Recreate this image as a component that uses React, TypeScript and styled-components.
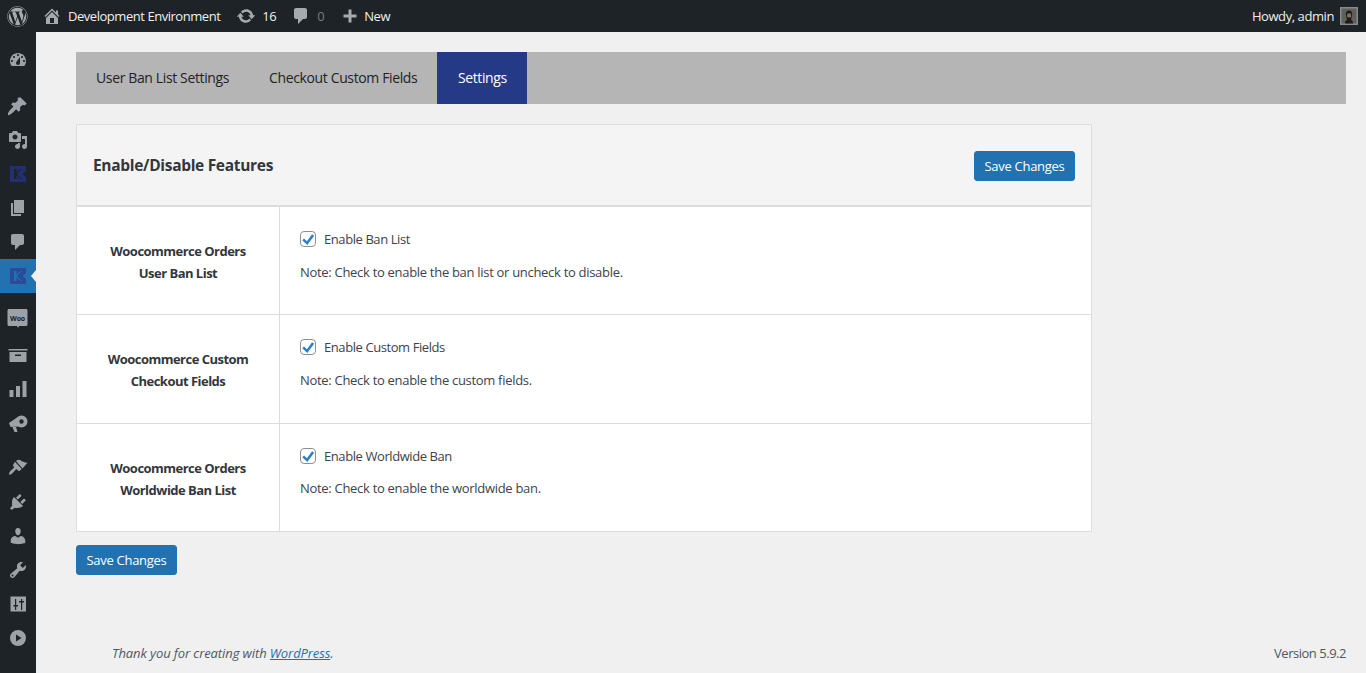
import React from "react";
import styled, { createGlobalStyle } from "styled-components";
import { FaWordpress } from "react-icons/fa";

const GlobalStyle = createGlobalStyle`
  html, body {
    margin: 0;
    padding: 0;
    background: #f0f0f1;
    font-family: "Open Sans", "Liberation Sans", sans-serif;
    color: #3c434a;
    font-size: 13px;
    letter-spacing: -0.3px;
  }
  * {
    box-sizing: border-box;
  }
`;

const Page = styled.div`
  width: 1366px;
  height: 673px;
  display: flex;
  flex-direction: column;
  overflow: hidden;
`;

const AdminBar = styled.div`
  height: 32px;
  flex: none;
  background: #1d2327;
  color: #f0f0f1;
  display: flex;
  align-items: center;
  padding: 0 8px 0 7px;
  letter-spacing: -0.46px;
`;

const BarItem = styled.div<{ $dim?: boolean; $left: number; $gap?: number }>`
  display: flex;
  align-items: center;
  gap: ${(p) => p.$gap ?? 6}px;
  margin-left: ${(p) => p.$left}px;
  color: ${(p) => (p.$dim ? "#787c82" : "#f0f0f1")};
  white-space: nowrap;
  svg {
    color: #a7aaad;
    flex: none;
  }
`;

const Howdy = styled.div`
  margin-left: auto;
  display: flex;
  align-items: center;
  gap: 6px;
  letter-spacing: -0.42px;
`;

const Avatar = styled.svg`
  width: 18px;
  height: 18px;
  display: block;
`;

const Body = styled.div`
  flex: 1;
  display: flex;
  min-height: 0;
`;

const Sidebar = styled.nav`
  width: 36px;
  flex: none;
  background: #1d2327;
  padding-top: 11px;
`;

const MenuItem = styled.div<{ $active?: boolean; $top?: number }>`
  position: relative;
  height: 34px;
  margin-top: ${(p) => p.$top || 0}px;
  display: flex;
  align-items: center;
  justify-content: center;
  padding-right: 1px;
  color: #9ca2a7;
  background: ${(p) => (p.$active ? "#2271b1" : "transparent")};
  ${(p) =>
    p.$active &&
    `&::after {
      content: "";
      position: absolute;
      right: 0;
      top: 50%;
      margin-top: -6px;
      border: 6px solid transparent;
      border-right-color: #f0f0f1;
      border-left-width: 0;
      border-right-width: 5px;
    }`}
`;

const Main = styled.main`
  flex: 1;
  min-width: 0;
  display: flex;
  flex-direction: column;
  padding: 20px 20px 10px 40px;
`;

const TabBar = styled.div`
  height: 52px;
  background: #b5b5b5;
  display: flex;
`;

const Tab = styled.div<{ $active?: boolean }>`
  padding: 0 20px 2px;
  display: flex;
  align-items: center;
  font-size: 14px;
  letter-spacing: -0.37px;
  color: ${(p) => (p.$active ? "#fff" : "#1d2327")};
  background: ${(p) => (p.$active ? "#253a86" : "transparent")};
`;

const ActiveTab = styled(Tab)`
  width: 90px;
  justify-content: center;
  padding: 0 0 2px;
`;

const Card = styled.section`
  width: 1016px;
  margin-top: 20px;
  background: #fff;
  border: 1px solid #dcdcde;
`;

const CardHeader = styled.header`
  height: 82px;
  background: #f4f4f4;
  border-bottom: 2px solid #dcdcde;
  display: flex;
  align-items: center;
  justify-content: space-between;
  padding: 0 16px;
`;

const CardTitle = styled.h2`
  margin: 0;
  font-size: 15.5px;
  font-weight: 700;
  letter-spacing: -0.31px;
  color: #32373c;
`;

const Button = styled.button`
  height: 30px;
  width: 101px;
  padding: 0;
  border: 1px solid #2271b1;
  border-radius: 3px;
  background: #2271b1;
  color: #fff;
  font: inherit;
  letter-spacing: -0.28px;
  cursor: pointer;
`;

const HeaderButton = styled(Button)`
  margin-top: 2px;
`;

const Row = styled.div<{ $height: number; $last?: boolean }>`
  height: ${(p) => p.$height}px;
  display: grid;
  grid-template-columns: 203px 1fr;
  border-bottom: ${(p) => (p.$last ? "none" : "1px solid #dcdcde")};
`;

const RowLabel = styled.div`
  border-right: 1px solid #dcdcde;
  display: flex;
  align-items: center;
  justify-content: center;
  text-align: center;
  font-weight: 700;
  letter-spacing: -0.52px;
  line-height: 22px;
  color: #32373c;
  padding: 2px 20px 0;
`;

const RowBody = styled.div`
  padding: 24px 20px 0;
`;

const CheckLine = styled.label`
  display: flex;
  align-items: center;
  gap: 8px;
  height: 16px;
  letter-spacing: -0.42px;
`;

const CheckBox = styled.span`
  width: 16px;
  height: 16px;
  border: 1px solid #8c8f94;
  border-radius: 4px;
  background: #fff;
  display: flex;
  align-items: center;
  justify-content: center;
`;

const Note = styled.p<{ $gap: number }>`
  margin: ${(p) => p.$gap}px 0 0;
  line-height: 17px;
`;

const BottomBar = styled.div`
  margin-top: 13px;
`;

const Footer = styled.footer`
  margin-top: auto;
  padding-left: 36px;
  display: flex;
  justify-content: space-between;
  color: #50575e;
  line-height: 20px;
`;

const Thanks = styled.em`
  letter-spacing: -0.09px;
  a {
    color: #2271b1;
    text-decoration: underline;
  }
`;

const Version = styled.span`
  letter-spacing: -0.48px;
`;

const Icon = ({ children }: { children: React.ReactNode }) => (
  <svg width="20" height="20" viewBox="0 0 20 20" fill="currentColor">
    {children}
  </svg>
);

const HomeIcon = () => (
  <Icon>
    <path d="M16 8.500l1.530 1.530-1.060 1.060L10 4.620l-6.470 6.470-1.060-1.060L10 2.500l4 4v-2h2v4zm-6-2.460l6 5.990V18H4v-5.970zM12 17v-5H8v5h4z" />
  </Icon>
);

const UpdateIcon = () => (
  <Icon>
    <path d="M10.200 3.280c3.530 0 6.430 2.610 6.920 6h2.080l-3.500 4-3.500-4h2.320c-.450-1.970-2.210-3.440-4.320-3.440-1.450 0-2.730.710-3.540 1.780L4.950 5.660C6.230 4.200 8.110 3.280 10.200 3.280zm-.400 13.440c-3.520 0-6.430-2.610-6.920-6H.800l3.500-4c1.170 1.330 2.330 2.670 3.500 4H5.480c.450 1.970 2.210 3.440 4.320 3.440 1.450 0 2.730-.710 3.540-1.780l1.710 1.950c-1.280 1.460-3.150 2.390-5.250 2.390z" />
  </Icon>
);

const CommentPath = () => (
  <path d="M5 2h9c1.100 0 2 .900 2 2v7c0 1.100-.900 2-2 2h-2l-5 5v-5H5c-1.100 0-2-.900-2-2V4c0-1.100.900-2 2-2z" />
);

const PlusIcon = () => (
  <svg width="20" height="20" viewBox="0.500 -1.500 20 20" fill="currentColor">
    <path d="M17 7v3h-5v5H9v-5H4V7h5V2h3v5h5z" />
  </svg>
);

const DashboardIcon = () => (
  <Icon>
    <path
      fillRule="evenodd"
      d="M3.760 16h12.480c1.100-1.370 1.760-3.110 1.760-5 0-4.420-3.580-8-8-8s-8 3.580-8 8c0 1.890.660 3.630 1.760 5zM10 4c.550 0 1 .450 1 1s-.450 1-1 1-1-.450-1-1 .450-1 1-1zM6 6c.550 0 1 .450 1 1s-.450 1-1 1-1-.450-1-1 .450-1 1-1zm8 0c.550 0 1 .450 1 1s-.450 1-1 1-1-.450-1-1 .450-1 1-1zm-5.370 5.550L12 7v6c0 1.100-.900 2-2 2s-2-.900-2-2c0-.570.240-1.080.630-1.450zM4 10c.550 0 1 .450 1 1s-.450 1-1 1-1-.450-1-1 .450-1 1-1zm12 0c.550 0 1 .450 1 1s-.450 1-1 1-1-.450-1-1 .450-1 1-1z"
    />
  </Icon>
);

const PinIcon = () => (
  <Icon>
    <path d="M12.300 1.200l6.400 6.400-1.800 1.800c-1-.7-2.500-.6-3.400.4l-.8.700c-.9.900-1 2.400-.3 3.400l-1.900 1.800-2.400-2.400-2.900 2.900c-1.500 1.600-4.900 3.500-5.500 2.900-.7-.7 1.300-4 2.900-5.600l2.900-2.900-2.400-2.400 1.800-1.800c1.100.7 2.500.6 3.400-.4l.8-.7c.9-.9 1-2.400.3-3.400z" />
  </Icon>
);

const MediaIcon = () => (
  <Icon>
    <path
      fillRule="evenodd"
      d="M13 11V4c0-.550-.450-1-1-1h-1.670L9 1H5L3.670 3H2c-.550 0-1 .450-1 1v7c0 .550.450 1 1 1h10c.550 0 1-.450 1-1zM7 4.500c1.380 0 2.500 1.120 2.500 2.500S8.380 9.500 7 9.500 4.500 8.380 4.500 7 5.620 4.500 7 4.500z"
    />
    <path d="M14 6h5v10.500c0 1.380-1.120 2.500-2.500 2.500S14 17.880 14 16.500s1.120-2.500 2.500-2.500c.170 0 .340.020.500.050V9h-3V6zm-4 8.050V13h2v3.500c0 1.380-1.120 2.500-2.500 2.500S7 17.880 7 16.500 8.120 14 9.500 14c.170 0 .340.020.500.050z" />
  </Icon>
);

const KLogo = ({ color }: { color: string }) => (
  <svg width="20" height="20" viewBox="0 0 20 20">
    <path
      fill={color}
      fillRule="evenodd"
      d="M2 2h16v5l-3.300 3 3.300 3v5H2zM6 5v10h2.500v-3.700L12.500 15h1.300l-5-5 5-5h-1.300L8.500 8.700V5z"
    />
  </svg>
);

const PagesIcon = () => (
  <Icon>
    <path d="M6 15V2h10v13H6zm-1 1h8v2H3V5h2v11z" />
  </Icon>
);

const WooIcon = () => (
  <svg width="21" height="21" viewBox="0 0 21 21">
    <path
      fill="currentColor"
      d="M2 1h17c.800 0 1.500.700 1.500 1.500v14c0 .800-.700 1.500-1.500 1.500h-7l-1 2-1-2H2c-.800 0-1.500-.700-1.500-1.500v-14C.500 1.700 1.200 1 2 1z"
    />
    <text x="10.500" y="12.500" textAnchor="middle" fontSize="7" fontWeight="700" letterSpacing="-0.200" fill="#1d2327" fontFamily="Open Sans, sans-serif">
      Woo
    </text>
  </svg>
);

const ArchiveIcon = () => (
  <Icon>
    <path d="M0.500 4h19v1.500h-19z" />
    <path fillRule="evenodd" d="M1.500 7h17v10h-17zM7 9.500V11h6V9.500z" />
  </Icon>
);

const ChartIcon = () => (
  <Icon>
    <path d="M1.500 11h4v7h-4zM8 7h4v11H8zM14.500 2h4v16h-4z" />
  </Icon>
);

const MegaphoneIcon = () => (
  <Icon>
    <path fillRule="evenodd" d="M13.500 2.500a6 6 0 1 1 0 12 6 6 0 0 1 0-12zm0 3.800a2.200 2.200 0 1 0 0 4.400 2.200 2.200 0 0 0 0-4.400z" />
    <path d="M1 10l9.500-6.500c-2 3-2 6.800.5 10L2.500 14z" />
    <path d="M4.500 14h3.500l1.500 5H6.500z" />
  </Icon>
);

const BrushIcon = () => (
  <svg width="20" height="20" viewBox="0 -1 20 20" fill="currentColor">
    <path d="M8 3l1.500-1c.7-.400 2.300-.200 3.400.500 1.300.800 3 2 6.600 2.300l-5 5.700z" />
    <path d="M7 3.800l6.700 7.300-2 1.700c-.5.400-1.100.300-1.500-.1l-1.100-1.200c-.4-.400-.9-.400-1.300 0-.6.700-1.200 1.500-1.900 2.300-.9 1-3.200 3.600-4.400 2.700-1.300-1 .9-3.800 1.900-4.600.8-.7 1.700-1.300 2.400-1.900.4-.4.400-.9 0-1.300L5.300 7.800c-.4-.4-.4-1 0-1.400z" />
  </svg>
);

const PluginIcon = () => (
  <Icon>
    <path d="M13.110 4.360L9.870 7.600 8 5.730l3.240-3.240c.350-.340 1.050-.200 1.560.320.520.510.660 1.210.310 1.550zm-8 1.770l.910-1.120 9.010 9.010-1.190.840c-.710.710-2.630 1.160-3.820 1.160H6.140L4.900 17.260c-.590.590-1.540.590-2.120 0-.590-.580-.590-1.530 0-2.120l1.240-1.240v-3.880c0-1.130.400-3.190 1.090-3.890zm7.260 3.970l3.240-3.240c.340-.350 1.040-.210 1.550.310.520.510.660 1.210.310 1.550l-3.240 3.250z" />
  </Icon>
);

const UserIcon = () => (
  <Icon>
    <path d="M10 9.250c-2.270 0-2.730-3.440-2.730-3.440C7 4.020 7.820 2 9.970 2c2.160 0 2.980 2.020 2.710 3.810 0 0-.410 3.440-2.680 3.440zm0 2.570L12.720 10c2.390 0 4.520 2.330 4.520 4.530v2.490s-3.650 1.130-7.240 1.130c-3.650 0-7.240-1.130-7.240-1.130v-2.490c0-2.250 1.940-4.480 4.470-4.480z" />
  </Icon>
);

const ToolsIcon = () => (
  <Icon>
    <path
      fillRule="evenodd"
      d="M16.680 9.770c-1.340 1.340-3.300 1.670-4.950.990l-5.410 6.520c-.990.990-2.590.990-3.580 0s-.990-2.590 0-3.570l6.520-5.420c-.680-1.650-.350-3.610.990-4.950 1.280-1.280 3.120-1.620 4.720-1.060l-2.890 2.890 2.820 2.820 2.860-2.870c.530 1.580.180 3.390-1.080 4.650zM3.810 16.210c.400.390 1.040.390 1.430 0 .400-.400.400-1.040 0-1.430-.390-.400-1.030-.400-1.430 0-.390.390-.390 1.030 0 1.430z"
    />
  </Icon>
);

const SlidersIcon = () => (
  <Icon>
    <path
      fillRule="evenodd"
      d="M2.500 2.500h15.500v15H2.500zM7 5v6H5.500v1.500H7V16h1.200v-3.500H10V11H8.200V5zM13 5v2h-2v1.500h2V16h1.200V8.500H16V7h-1.800V5z"
    />
  </Icon>
);

const PlayIcon = () => (
  <Icon>
    <path fillRule="evenodd" d="M10 2a8 8 0 1 1 0 16 8 8 0 0 1 0-16zM8 6.500v7l5.500-3.500z" />
  </Icon>
);

const Tick = () => (
  <svg width="15" height="15" viewBox="0 0 20 20">
    <path fill="#2f7fc4" d="M15.800 2.500 18.800 4.700 9 18 1.800 11 4.300 8.400 8.500 12.500z" />
  </svg>
);

const FaceAvatar = () => (
  <Avatar viewBox="0 0 18 18">
    <rect width="18" height="18" fill="#8a8a88" />
    <rect x="1.500" y="1.500" width="15" height="15" fill="#5f5f5c" />
    <path fill="#1f1b19" d="M5 16.500c0-2.500.8-3.200 2-3.600L5.800 7c0-2.500 1.600-3.500 3.200-3.500s3.300 1 3.200 3.500L11 13c1.200.4 2 1 2 3.500z" />
    <path fill="#8a6c5e" d="M7.200 6.500h3.800v2.700l-.8 1.300H8l-.8-1.300z" />
  </Avatar>
);

const settings = [
  {
    label: ["Woocommerce Orders", "User Ban List"],
    check: "Enable Ban List",
    note: "Note: Check to enable the ban list or uncheck to disable.",
    height: 108,
    noteGap: 17,
  },
  {
    label: ["Woocommerce Custom", "Checkout Fields"],
    check: "Enable Custom Fields",
    note: "Note: Check to enable the custom fields.",
    height: 109,
    noteGap: 17,
  },
  {
    label: ["Woocommerce Orders", "Worldwide Ban List"],
    check: "Enable Worldwide Ban",
    note: "Note: Check to enable the worldwide ban.",
    height: 107,
    noteGap: 16,
  },
];

const App: React.FC = () => {
  return (
    <Page>
      <GlobalStyle />
      <AdminBar>
        <BarItem $left={0}>
          <FaWordpress size={21} />
        </BarItem>
        <BarItem $left={14}>
          <HomeIcon />
          Development Environment
        </BarItem>
        <BarItem $left={16}>
          <UpdateIcon />
          16
        </BarItem>
        <BarItem $left={15} $dim>
          <Icon>
            <CommentPath />
          </Icon>
          0
        </BarItem>
        <BarItem $left={16} $gap={4}>
          <PlusIcon />
          New
        </BarItem>
        <Howdy>
          Howdy, admin
          <FaceAvatar />
        </Howdy>
      </AdminBar>
      <Body>
        <Sidebar>
          <MenuItem><DashboardIcon /></MenuItem>
          <MenuItem $top={12}><PinIcon /></MenuItem>
          <MenuItem><MediaIcon /></MenuItem>
          <MenuItem><KLogo color="#22306f" /></MenuItem>
          <MenuItem><PagesIcon /></MenuItem>
          <MenuItem><Icon><CommentPath /></Icon></MenuItem>
          <MenuItem $active><KLogo color="#2b4a9a" /></MenuItem>
          <MenuItem $top={8}><WooIcon /></MenuItem>
          <MenuItem $top={3}><ArchiveIcon /></MenuItem>
          <MenuItem><ChartIcon /></MenuItem>
          <MenuItem><MegaphoneIcon /></MenuItem>
          <MenuItem $top={10}><BrushIcon /></MenuItem>
          <MenuItem $top={1}><PluginIcon /></MenuItem>
          <MenuItem><UserIcon /></MenuItem>
          <MenuItem><ToolsIcon /></MenuItem>
          <MenuItem><SlidersIcon /></MenuItem>
          <MenuItem><PlayIcon /></MenuItem>
        </Sidebar>
        <Main>
          <TabBar>
            <Tab>User Ban List Settings</Tab>
            <Tab>Checkout Custom Fields</Tab>
            <ActiveTab $active>Settings</ActiveTab>
          </TabBar>
          <Card>
            <CardHeader>
              <CardTitle>Enable/Disable Features</CardTitle>
              <HeaderButton>Save Changes</HeaderButton>
            </CardHeader>
            {settings.map((s, i) => (
              <Row key={s.check} $height={s.height} $last={i === settings.length - 1}>
                <RowLabel>
                  <div>
                    {s.label[0]}
                    <br />
                    {s.label[1]}
                  </div>
                </RowLabel>
                <RowBody>
                  <CheckLine>
                    <CheckBox><Tick /></CheckBox>
                    {s.check}
                  </CheckLine>
                  <Note $gap={s.noteGap}>{s.note}</Note>
                </RowBody>
              </Row>
            ))}
          </Card>
          <BottomBar>
            <Button>Save Changes</Button>
          </BottomBar>
          <Footer>
            <Thanks>
              Thank you for creating with <a href="#wp">WordPress</a>.
            </Thanks>
            <Version>Version 5.9.2</Version>
          </Footer>
        </Main>
      </Body>
    </Page>
  );
};

export default App;
